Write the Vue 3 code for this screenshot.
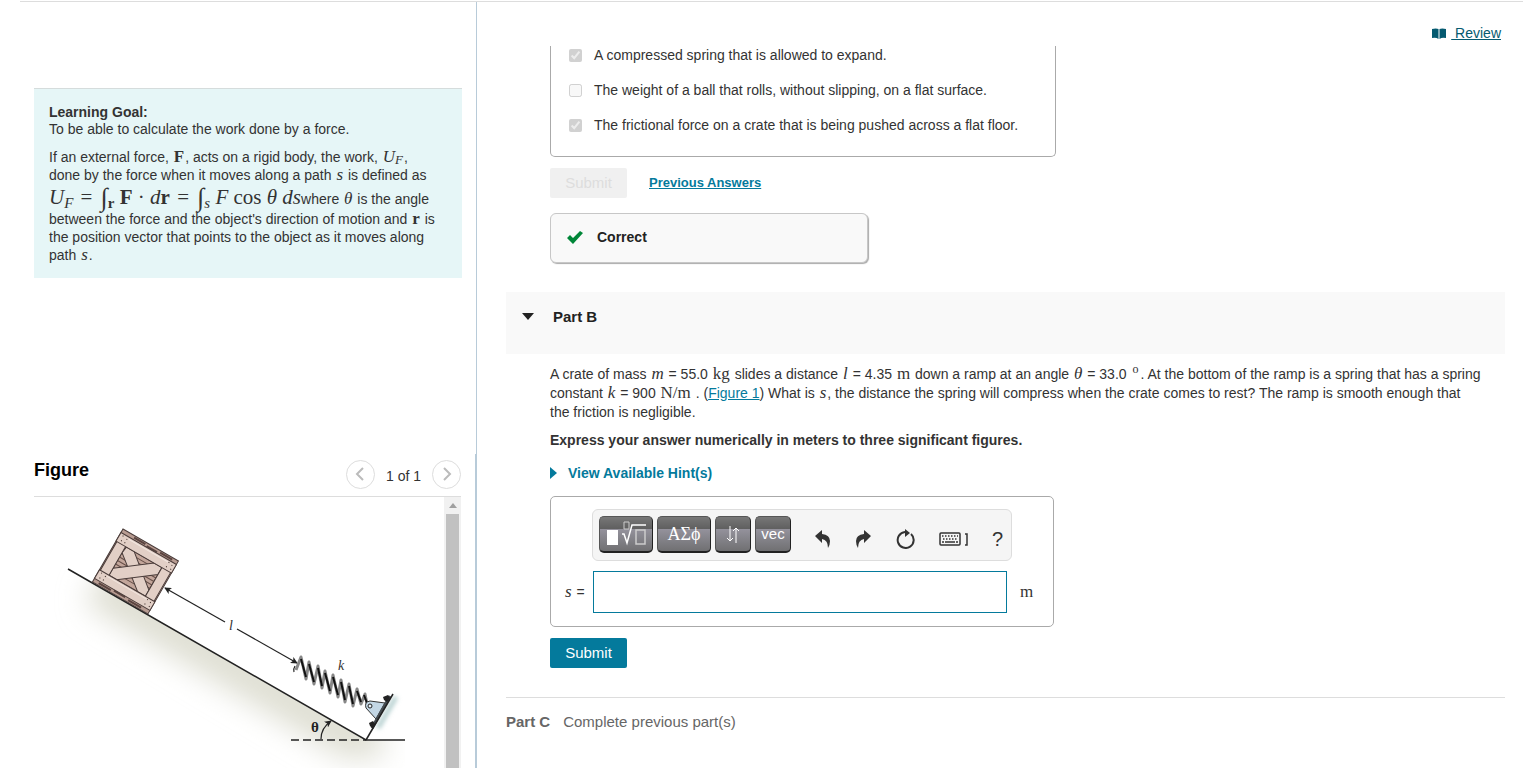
<template>
	<div class='page'>
		<aside class='side'>
			<div class='side-top'>
				<section class='goal'>
					<strong>Learning Goal:</strong>
					<p class='lead'>To be able to calculate the work done by a force.</p>
					<p>
						If an external force, <b class='math'>F</b>, acts on a rigid body, the work, <i class='math'>U<sub>F</sub></i>,<br />
						done by the force when it moves along a path <i class='math'>s</i> is defined as
						<span class='formula'><i>U<sub>F</sub></i> <span class='op'>=</span> <span class='int'>∫</span><sub><b>r</b></sub> <b>F</b> · <i>d</i><b>r</b> <span class='op'>=</span> <span class='int'>∫</span><sub><i>s</i></sub> <i>F</i> cos <i>θ ds</i></span>where <i class='math'>θ</i> is the angle
						between the force and the object's direction of motion and <b class='math'>r</b> is
						the position vector that points to the object as it moves along
						path <i class='math'>s</i>.
					</p>
				</section>
			</div>
			<section class='figure'>
				<header class='figure-head'>
					<h2>Figure</h2>
					<div class='pager'>
						<button type='button' class='round' aria-label='Previous figure'>
							<svg width='12' height='14' viewBox='0 0 12 14'><path d='M9 1 3 7l6 6' /></svg>
						</button>
						<span>1 of 1</span>
						<button type='button' class='round' aria-label='Next figure'>
							<svg width='12' height='14' viewBox='0 0 12 14'><path d='m3 1 6 6-6 6' /></svg>
						</button>
					</div>
				</header>
				<div class='figure-body'>
					<svg class='drawing' width='410' height='271' viewBox='34 497 410 271'>
						<defs>
							<clipPath id='below'>
								<path d='M50 558 366 740H405V790H50Z' />
							</clipPath>
							<filter id='soft' x='-30%' y='-30%' width='160%' height='160%'>
								<feGaussianBlur stdDeviation='15' />
							</filter>
							<filter id='haze' x='-100%' y='-50%' width='300%' height='200%'>
								<feGaussianBlur stdDeviation='2' />
							</filter>
							<marker id='head' viewBox='0 0 8 8' refX='7' refY='4' markerWidth='7' markerHeight='7' markerUnits='userSpaceOnUse' orient='auto-start-reverse'>
								<path d='M0 0 8 4 0 8 2 4Z' fill='#222' />
							</marker>
						</defs>
						<!-- ground -->
						<g clip-path='url(#below)'>
							<path d='M96 584 350 736H382' fill='none' stroke='#deded2' stroke-width='44' filter='url(#soft)' />
						</g>
						<path d='M68 569 366 740H405' class='ink' />
						<path d='M291 740H366' class='ink' stroke-dasharray='8 4' />
						<!-- crate -->
						<g transform='translate(123 529) rotate(30)' stroke='#4a3c3a' stroke-width='1'>
							<rect width='64' height='61' fill='#b89c92' />
							<path d='M14 2H27M29 3H41M44 2H58M6 59H20M23 58H36M40 59H55' stroke-width='2' stroke='#5b4541' />
							<rect x='11' y='14' width='42' height='33' fill='#c3a69b' />
							<path d='M11 18H53M11 22H53M11 26H53M11 30H53M11 34H53M11 38H53M11 42H53' stroke='#685049' />
							<path d='M12 14H21L53 40V47H44L11 21Z' fill='#e2cfc6' stroke-width='1' />
							<path d='M11 39 44 14H53V22L20 47H11Z' fill='#e2cfc6' stroke-width='1' />
							<rect x='1' y='13' width='10' height='35' fill='#e2cfc6' />
							<rect x='53' y='13' width='10' height='35' fill='#e2cfc6' />
							<rect y='4' width='64' height='10' fill='#e2cfc6' />
							<rect y='47' width='64' height='10' fill='#e2cfc6' />
							<path d='M10 6H56M10 49H56' stroke='#f2e6df' />
							<path d='M3 6h1M8 7h1M4 11h1M8 11h1M56 6h1M60 7h1M56 11h1M61 11h1M3 49h1M8 50h1M4 54h1M8 54h1M56 49h1M60 50h1M56 54h1M61 54h1' stroke='#40302c' />
						</g>
						<!-- distance -->
						<path d='M225 622 165 588' class='thin' marker-end='url(#head)' />
						<path d='M237 629 297 663' class='thin' marker-end='url(#head)' />
						<text x='229' y='630' class='label'>l</text>
						<text x='338' y='670' class='label'>k</text>
						<!-- spring -->
						<path class='coil' d='M296 670 301 657 306 679 309 662 314 684 318 666 322 688 325 671 330 693 333 675 338 697 341 680 345 702 349 684 353 706 357 689 361 704 365 694 367 704' />
						<path class='coil-dark' d='M301 659 306 677M309 664 314 682M318 668 322 686M325 673 330 691M333 677 338 695M341 682 345 700M349 686 353 704M357 691 361 702M364 695 367 703' />
						<path d='M294 672q-1-3 1-6' class='thin' />
						<!-- wall bracket -->
						<path d='M396 697 378 728' stroke='#b9d2d2' stroke-width='5' filter='url(#haze)' />
						<path d='M366 708q-2-6 4-7l15 2-9 16Z' fill='#c3d7e5' stroke='#333' stroke-width='1' />
						<circle cx='370' cy='706' r='2' fill='#e8f0f5' stroke='#222' stroke-width='1' />
						<path d='M390 696 372 728' stroke='#444b50' stroke-width='3' />
						<path d='M393 694 366 740' class='ink' />
						<path d='m383 697 5-2 2 3-3 4-3-2ZM369 723l4-2 2 3-2 5-3-3Z' fill='#222' />
						<!-- angle -->
						<path d='M321 739Q321 728 331 721' class='thin' marker-end='url(#head)' />
						<text x='311' y='732' class='theta'>θ</text>
					</svg>
					<div class='track'>
						<svg width='17' height='17' viewBox='0 0 17 17'><path d='M5 11 9 6l4 5Z' fill='#a0a0a0' /></svg>
						<div class='thumb'></div>
					</div>
				</div>
			</section>
		</aside>

		<main class='main'>
			<div class='top'>
				<svg width='14' height='11' viewBox='0 0 14 11'>
					<path d='M0 1Q4 0 6.500 1V11Q4 9 0 10ZM14 1Q10 0 7.500 1V11Q10 9 14 10Z' fill='#055a70' />
				</svg>
				<a href='#' class='review'>&nbsp;Review</a>
			</div>

			<div class='scroll'>
				<div class='indent'>
					<div class='choices'>
						<label v-for='choice in choices' :key='choice.text'>
							<input type='checkbox' :checked='choice.checked' disabled />
							<span>{{ choice.text }}</span>
						</label>
					</div>
					<div class='actions'>
						<button type='button' class='submit' disabled>Submit</button>
						<a href='#' class='previous'>Previous Answers</a>
					</div>
					<div class='correct'>
						<svg width='16' height='13' viewBox='0 0 16 13'><path d='M0 7 3 4l3 3 7-7 3 2L6 13Z' fill='#008638' /></svg>
						<strong>Correct</strong>
					</div>
				</div>

				<header class='part-head'>
					<svg width='12' height='7' viewBox='0 0 12 7'><path d='M0 0H12L6 7Z' fill='#222' /></svg>
					<h2>Part B</h2>
				</header>

				<div class='indent'>
					<p class='question'>
						A crate of mass <i class='math'>m</i> = 55.0 <span class='math'>kg</span> slides a distance <i class='math'>l</i> = 4.35 <span class='math'>m</span> down a ramp at an angle <i class='math'>θ</i> = 33.0 <sup>o</sup>. At the bottom of the ramp is a spring that has a spring
						constant <i class='math'>k</i> = 900 <span class='math'>N/m</span> . (<a href='#'>Figure 1</a>) What is <i class='math'>s</i>, the distance the spring will compress when the crate comes to rest? The ramp is smooth enough that<br />
						the friction is negligible.
					</p>
					<p class='instruction'>Express your answer numerically in meters to three significant figures.</p>
					<button type='button' class='hints'>
						<svg width='7' height='12' viewBox='0 0 7 12'><path d='M0 0 7 6 0 12Z' fill='#047a9c' /></svg>
						View Available Hint(s)
					</button>

					<div class='answer'>
						<div class='toolbar'>
							<button type='button' class='key wide' aria-label='Templates'>
								<svg width='42' height='26' viewBox='0 0 42 26' fill='none' stroke='#fff'>
									<path d='M2 9H13V24H2Z' fill='#fff' stroke='none' />
									<path d='M19 1H24V8H19Z' stroke='#ccc' />
									<path d='M17 13H19L22 22 27 4H41' stroke-width='1.500' />
									<path d='M31 9H40V23H31Z' stroke='#ccc' stroke-width='1.500' />
								</svg>
							</button>
							<button type='button' class='key wide greek'>ΑΣϕ</button>
							<button type='button' class='key' aria-label='Subscript and superscript'>
								<svg width='14' height='17' viewBox='0 0 14 17' fill='none' stroke='#fff'>
									<path d='M4 0V15M1 12 4 15 7 12M10 17V2M7 5 10 2 13 5' />
								</svg>
							</button>
							<button type='button' class='key vec'>vec</button>
							<div class='tools'>
								<button type='button' class='tool' aria-label='Undo'>
									<svg width='16' height='18' viewBox='0 0 16 18'><path d='M0 6 7 0V4Q15 5 15 11 15 15 13 18 13 10 7 9V13Z' fill='#333' /></svg>
								</button>
								<button type='button' class='tool' aria-label='Redo'>
									<svg width='16' height='18' viewBox='0 0 16 18'><path d='M16 6 9 0V4Q1 5 1 11 1 15 3 18 3 10 9 9V13Z' fill='#333' /></svg>
								</button>
								<button type='button' class='tool' aria-label='Reset'>
									<svg width='20' height='20' viewBox='0 0 20 20'>
										<path d='M16 5A8 8 0 1 1 10 3H12' fill='none' stroke='#333' stroke-width='2' />
										<path d='M10 0 15 4 10 8Z' fill='#333' />
									</svg>
								</button>
								<button type='button' class='tool keyboard' aria-label='Keyboard shortcuts'>
									<svg width='29' height='14' viewBox='0 0 29 14' fill='none' stroke='#333'>
										<rect x='1' y='1' width='20' height='12' rx='1' stroke-width='1.500' />
										<path d='M3 4H19M4 7H19' stroke-width='1.500' stroke-dasharray='1.500 1.500' />
										<path d='M3 10H5M6 10H16M17 10H19' stroke-width='1.500' />
										<path d='M26 2H28V13H26' stroke-width='1.500' />
									</svg>
								</button>
								<button type='button' class='tool help' aria-label='Help'>?</button>
							</div>
						</div>
						<div class='entry'>
							<label for='answer'><i class='math'>s</i> =</label>
							<input id='answer' v-model='answer' type='text' />
							<span class='unit'>m</span>
						</div>
					</div>
					<button type='button' class='submit'>Submit</button>
				</div>

				<footer class='next'>
					<strong>Part C</strong>
					<span>Complete previous part(s)</span>
				</footer>
			</div>
		</main>
	</div>
</template>

<script setup>
import { ref } from 'vue'

const answer = ref('')

const choices = [
  { text: 'A compressed spring that is allowed to expand.', checked: true },
  { text: 'The weight of a ball that rolls, without slipping, on a flat surface.', checked: false },
  { text: 'The frictional force on a crate that is being pushed across a flat floor.', checked: true }
]
</script>

<style>
body {
	margin: 0;
	background: #fff;
}
</style>

<style scoped>
.page {
	display: flex;
	height: 100vh;
	overflow: hidden;
	box-sizing: border-box;
	position: relative;
	padding-top: 2px;
	font-family: "Liberation Sans", Arial, sans-serif;
	font-size: 14px;
	color: #333;
}

.page::before {
	content: '';
	position: absolute;
	top: 1px;
	left: 20px;
	right: 0;
	height: 1px;
	background: #ddd;
}

h2, p {
	margin: 0;
}

button {
	font: inherit;
	padding: 0;
	border: 0;
	background: none;
	cursor: pointer;
}

svg {
	display: block;
	flex: none;
}

a {
	color: #047a9c;
}

/* left column */
.side {
	flex: 0 0 476px;
	display: grid;
	grid-template-rows: minmax(0, 59fr) minmax(0, 41fr);
	border-right: 1px solid #b8cbd9;
}

.side-top {
	padding: 86px 14px 0 34px;
}

.goal {
	padding: 15px 14px 14px 15px;
	background: #e6f6f7;
	border-top: 1px solid #d5dcdc;
	line-height: 18px;
}

.goal strong, .goal .lead {
	display: block;
	line-height: 17px;
}

.goal .lead {
	margin-bottom: 10px;
}

.math {
	margin: 0 1px;
	font-family: "Liberation Serif", serif;
	font-size: 17px;
	line-height: 1;
}

sub, sup {
	line-height: 0;
}

.math sub {
	font-size: 13px;
	vertical-align: -2px;
}

.formula {
	display: inline-block;
	font-family: "Liberation Serif", serif;
	font-size: 21px;
	line-height: 26px;
	white-space: nowrap;
}

.formula sub {
	font-size: 15px;
	vertical-align: -4px;
}

.op {
	margin: 0 2px;
}

.int {
	margin-left: 1px;
	font-size: 26px;
	line-height: 0;
	vertical-align: -2px;
}

.figure {
	display: flex;
	flex-direction: column;
	padding: 0 14px 0 34px;
	border-right: 1px solid #b8cbd9;
}

.figure-head {
	display: flex;
	justify-content: space-between;
	height: 42px;
	flex: none;
	border-bottom: 1px solid #ddd;
}

.figure-head h2 {
	padding-top: 6px;
	font-size: 18px;
	line-height: 20px;
	color: #000;
}

.pager {
	display: flex;
	gap: 11px;
	padding-top: 6px;
	line-height: 32px;
}

.round {
	display: flex;
	align-items: center;
	justify-content: center;
	box-sizing: border-box;
	width: 29px;
	height: 29px;
	border: 1px solid #ddd;
	border-radius: 50%;
}

.round path {
	fill: none;
	stroke: #bbb;
	stroke-width: 2;
}

.figure-body {
	display: flex;
	justify-content: space-between;
	flex: 1;
	min-height: 0;
	overflow: hidden;
}

.ink, .thin {
	fill: none;
	stroke: #222;
	stroke-width: 1.500;
}

.thin {
	stroke-width: 1.200;
}

.coil {
	fill: none;
	stroke: #888;
	stroke-width: 3;
	stroke-linejoin: round;
}

.coil-dark {
	stroke: #111;
	stroke-width: 2;
}

.label {
	font: italic 14px "Liberation Serif", serif;
	fill: #333;
}

.theta {
	font: bold 15px "Liberation Serif", serif;
	fill: #222;
}

.track {
	display: flex;
	flex-direction: column;
	align-items: center;
	width: 17px;
	background: #f1f1f1;
}

.thumb {
	width: 13px;
	flex: 1;
	background: #c1c1c1;
}

/* right column */
.main {
	flex: 1;
	display: flex;
	flex-direction: column;
	min-width: 0;
	padding: 0 18px 0 29px;
}

.top {
	display: flex;
	flex: none;
	align-items: center;
	justify-content: flex-end;
	gap: 5px;
	height: 26px;
	padding: 18px 4px 0 0;
}

.review {
	color: #055a70;
}

.scroll {
	flex: 1;
	min-height: 0;
	overflow: hidden;
}

.indent {
	padding-left: 44px;
}

.choices {
	display: flex;
	flex-direction: column;
	gap: 17px;
	box-sizing: border-box;
	max-width: 506px;
	padding: 0 18px 22px;
	border: 1px solid #aaa;
	border-top: 0;
	border-radius: 0 0 5px 5px;
}

.choices label {
	display: flex;
	align-items: center;
	gap: 12px;
	line-height: 18px;
}

.choices input {
	width: 13px;
	height: 13px;
	margin: 0;
}

.actions {
	display: flex;
	align-items: center;
	gap: 22px;
	margin: 11px 0 15px;
}

.submit {
	display: block;
	box-sizing: border-box;
	width: 77px;
	height: 30px;
	padding-bottom: 2px;
	font-size: 15px;
	color: #fff;
	background: #047a9c;
	border-radius: 2px;
}

.submit:disabled {
	color: #ddd;
	background: #f0f0f0;
	cursor: default;
}

.previous {
	padding-bottom: 2px;
	font-size: 13px;
	font-weight: bold;
}

.correct {
	display: flex;
	align-items: center;
	gap: 14px;
	box-sizing: border-box;
	max-width: 318px;
	height: 50px;
	padding: 0 16px 2px;
	color: #222;
	background: #f9f9f9;
	border: 1px solid #c7c7c7;
	border-radius: 6px;
	box-shadow: 1px 1px 1px #aaa;
}

.part-head {
	display: flex;
	align-items: center;
	gap: 19px;
	box-sizing: border-box;
	height: 62px;
	margin: 29px 0 11px;
	padding: 0 16px 14px;
	background: #f9f9f9;
	color: #222;
}

.part-head h2 {
	font-size: 15px;
}

.question {
	line-height: 19px;
}

.question sup {
	margin: 0 2px;
	font-family: "Liberation Serif", serif;
	font-size: 12px;
}

.instruction {
	margin: 9px 0 15px;
	font-weight: bold;
	line-height: 18px;
}

.hints {
	display: flex;
	align-items: center;
	gap: 11px;
	font-weight: bold;
	line-height: 18px;
	color: #047a9c;
}

.answer {
	box-sizing: border-box;
	max-width: 504px;
	margin: 14px 0 11px;
	padding: 12px 13px 13px;
	border: 1px solid #aaa;
	border-radius: 5px;
}

.toolbar {
	display: flex;
	align-items: flex-start;
	gap: 4px;
	box-sizing: border-box;
	height: 52px;
	margin: 0 28px 10px;
	padding: 6px;
	background: #f5f5f5;
	border: 1px solid #ddd;
	border-radius: 6px;
}

.key {
	display: flex;
	align-items: center;
	justify-content: center;
	box-sizing: border-box;
	width: 36px;
	height: 37px;
	color: #fff;
	background: linear-gradient(#777 0, #606060 34%, #94929c 35%, #707072 100%);
	border: 1px solid #555;
	border-right-color: #222;
	border-bottom: 2px solid #222;
	border-radius: 5px;
}

.wide {
	width: 54px;
}

.greek {
	font-family: "Liberation Serif", serif;
	font-size: 18px;
}

.vec {
	align-items: flex-start;
	padding-top: 8px;
	font-size: 15px;
	line-height: 17px;
}

.tools {
	display: flex;
	align-items: center;
	gap: 24px;
	height: 46px;
	padding-left: 20px;
}

.help {
	font-size: 20px;
	line-height: 20px;
	color: #333;
}

.entry {
	display: flex;
	align-items: center;
}

.entry label {
	flex: 0 0 29px;
	padding-bottom: 2px;
	box-sizing: border-box;
}

.entry input {
	flex: 1;
	min-width: 0;
	height: 42px;
	box-sizing: border-box;
	padding: 0 8px;
	font: inherit;
	border: 1px solid #047a9c;
	outline: 0;
}

.unit {
	flex: 0 0 33px;
	padding-left: 13px;
	box-sizing: border-box;
	font-family: "Liberation Serif", serif;
	font-size: 17px;
}

.next {
	display: flex;
	gap: 13px;
	margin-top: 29px;
	padding-top: 15px;
	border-top: 1px solid #ddd;
	font-size: 15px;
	line-height: 18px;
	color: #666;
}
</style>
